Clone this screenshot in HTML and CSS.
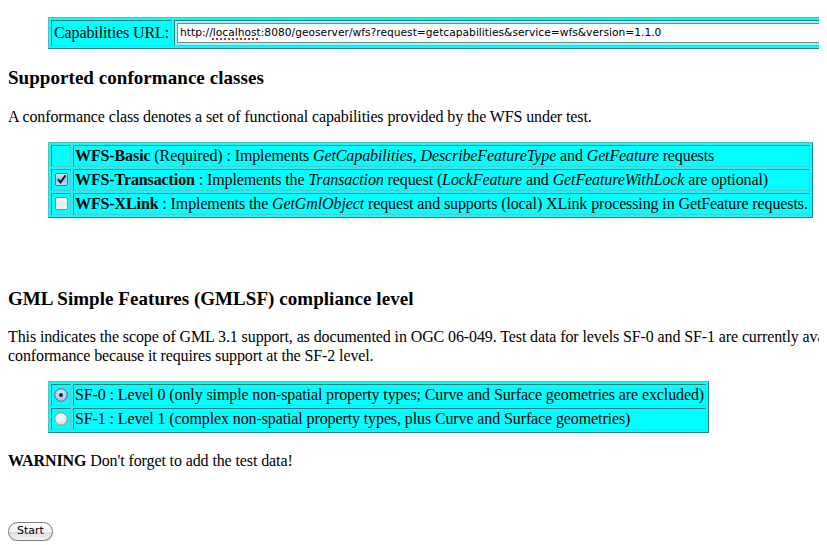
FILE: index.html
```html
<!DOCTYPE html>
<html>
<head>
<meta charset="utf-8">
<title>WFS 1.1.0 Test Suite</title>
<link rel="stylesheet" href="styles.css">
</head>
<body>
<div class="page">
  <blockquote class="blk url-block">
    <table class="opts">
      <tr>
        <td class="url-label">Capabilities URL:</td>
        <td class="url-cell">
          <div class="url-input">http://<span class="spell">localhost</span>:8080/geoserver/wfs?request=getcapabilities&amp;service=wfs&amp;version=1.1.0</div>
        </td>
      </tr>
    </table>
  </blockquote>

  <h3 class="heading">Supported conformance classes</h3>
  <p class="para">A conformance class denotes a set of functional capabilities provided by the WFS under test.</p>

  <blockquote class="blk conf-block">
    <table class="opts">
      <tr>
        <td class="ctl"></td>
        <td><b>WFS-Basic</b> (Required) : Implements <i>GetCapabilities</i>, <i>DescribeFeatureType</i> and <i>GetFeature</i> requests</td>
      </tr>
      <tr>
        <td class="ctl">
          <svg class="box" width="13" height="13" viewBox="0 0 13 13">
            <defs>
              <linearGradient id="gb" x1="0" y1="0" x2="0" y2="1">
                <stop offset="0" stop-color="#dbe9fb"/>
                <stop offset="0.5" stop-color="#9ec2ee"/>
                <stop offset="1" stop-color="#c6ddf8"/>
              </linearGradient>
            </defs>
            <rect x="0.5" y="0.5" width="12" height="12" rx="1.5" fill="url(#gb)" stroke="#5b6f8c"/>
            <path d="M3 6.3 L5.4 9.4 L10.6 2.4" fill="none" stroke="#111" stroke-width="1.8"/>
          </svg>
        </td>
        <td><b>WFS-Transaction</b> : Implements the <i>Transaction</i> request (<i>LockFeature</i> and <i>GetFeatureWithLock</i> are optional)</td>
      </tr>
      <tr>
        <td class="ctl">
          <svg class="box" width="13" height="13" viewBox="0 0 13 13">
            <defs>
              <linearGradient id="gw" x1="0" y1="0" x2="0" y2="1">
                <stop offset="0" stop-color="#ffffff"/>
                <stop offset="0.55" stop-color="#e9e9e9"/>
                <stop offset="1" stop-color="#f7f7f7"/>
              </linearGradient>
            </defs>
            <rect x="0.5" y="0.5" width="12" height="12" rx="1.5" fill="url(#gw)" stroke="#8a8a8a"/>
          </svg>
        </td>
        <td><b>WFS-XLink</b> : Implements the <i>GetGmlObject</i> request and supports (local) XLink processing in GetFeature requests.</td>
      </tr>
    </table>
  </blockquote>

  <h3 class="heading gml-heading">GML Simple Features (GMLSF) compliance level</h3>
  <p class="para">This indicates the scope of GML 3.1 support, as documented in OGC 06-049. Test data for levels SF-0 and SF-1 are currently available; a WFS may not claim SF-2<br>conformance because it requires support at the SF-2 level.</p>

  <blockquote class="blk sf-block">
    <table class="opts">
      <tr>
        <td class="ctl">
          <svg class="radio" width="14" height="14" viewBox="0 0 14 14">
            <defs>
              <radialGradient id="rb" cx="0.5" cy="0.35" r="0.7">
                <stop offset="0" stop-color="#e6f0fc"/>
                <stop offset="1" stop-color="#8fb6e8"/>
              </radialGradient>
            </defs>
            <circle cx="7" cy="7" r="6.3" fill="url(#rb)" stroke="#56698a"/>
            <circle cx="7" cy="7" r="2" fill="#1a2230"/>
          </svg>
        </td>
        <td>SF-0 : Level 0 (only simple non-spatial property types; Curve and Surface geometries are excluded)</td>
      </tr>
      <tr>
        <td class="ctl">
          <svg class="radio" width="14" height="14" viewBox="0 0 14 14">
            <defs>
              <radialGradient id="rw" cx="0.5" cy="0.3" r="0.75">
                <stop offset="0" stop-color="#ffffff"/>
                <stop offset="1" stop-color="#d6d6d6"/>
              </radialGradient>
            </defs>
            <circle cx="7" cy="7" r="6.3" fill="url(#rw)" stroke="#8c8c8c"/>
          </svg>
        </td>
        <td>SF-1 : Level 1 (complex non-spatial property types, plus Curve and Surface geometries)</td>
      </tr>
    </table>
  </blockquote>

  <p class="para warning"><b>WARNING</b> Don't forget to add the test data!</p>

  <div class="actions">
    <button class="start" type="button">Start</button>
  </div>
</div>
</body>
</html>
```

FILE: styles.css
```css
html {
  overflow: hidden;
  background: #fff;
}

body {
  margin: 0 8px 8px 8px;
  font-family: "Liberation Serif", "Times New Roman", serif;
  font-size: 16px;
  letter-spacing: -0.11px;
  color: #000;
  background: #fff;
}

.page {
  width: 1200px;
  padding-top: 1px;
}

.blk {
  margin: 16px 0 16px 40px;
}

.url-block {
  margin-top: 16px;
}

.conf-block {
  margin-top: 15px;
}

.heading {
  font-size: 19px;
  letter-spacing: 0.05px;
  font-weight: bold;
  margin: 18px 0;
  line-height: 21.5px;
}

.gml-heading {
  margin-top: 70px;
}

.para {
  margin: 16px 0;
  line-height: 19px;
}

.opts {
  border-collapse: separate;
  border-spacing: 2px;
  background: #00ffff;
  border: 1px solid;
  border-color: #4fc4c4 #2a8282 #2a8282 #4fc4c4;
}

.opts td {
  border: 1px solid;
  border-color: #2a7f7f #52c8c8 #52c8c8 #2a7f7f;
  padding: 1px;
  line-height: 18px;
  vertical-align: middle;
  white-space: nowrap;
}

.opts td.ctl {
  padding: 1px 2px 1px 3px;
}

.box,
.radio {
  display: block;
}

.radio {
  margin-left: -1px;
}

.opts td.url-label {
  padding: 2px 2px 3px 2px;
  line-height: 19px;
}

.opts td.url-cell {
  padding: 1px 2px;
}

.url-input {
  width: 760px;
  height: 18px;
  margin: 1px 0;
  background: #fff;
  border: 1px solid #6f8f8f;
  box-shadow: 0 0 0 2px #9ff3f3;
  font-family: "DejaVu Sans", "Verdana", sans-serif;
  font-size: 10.7px;
  letter-spacing: 0;
  line-height: 18px;
  padding: 0 4px 0 2px;
  white-space: nowrap;
  overflow: hidden;
}

.spell {
  text-decoration: underline dotted #e0262b;
  text-decoration-thickness: 2px;
  text-underline-offset: 2px;
}

.sf-block {
  margin-top: 16px;
}

.warning {
  margin-top: 18px;
}

.actions {
  padding-top: 34px;
}

.start {
  font-family: "DejaVu Sans", "Verdana", sans-serif;
  font-size: 11px;
  letter-spacing: 0;
  color: #000;
  height: 19px;
  padding: 0 8px;
  border: 1px solid #7c7c7c;
  border-radius: 10px;
  background: linear-gradient(#ffffff, #f1f1f1 50%, #dcdcdc 51%, #f4f4f4);
  box-shadow: 0 1px 1px rgba(0,0,0,0.2);
  line-height: 16px;
}
```
